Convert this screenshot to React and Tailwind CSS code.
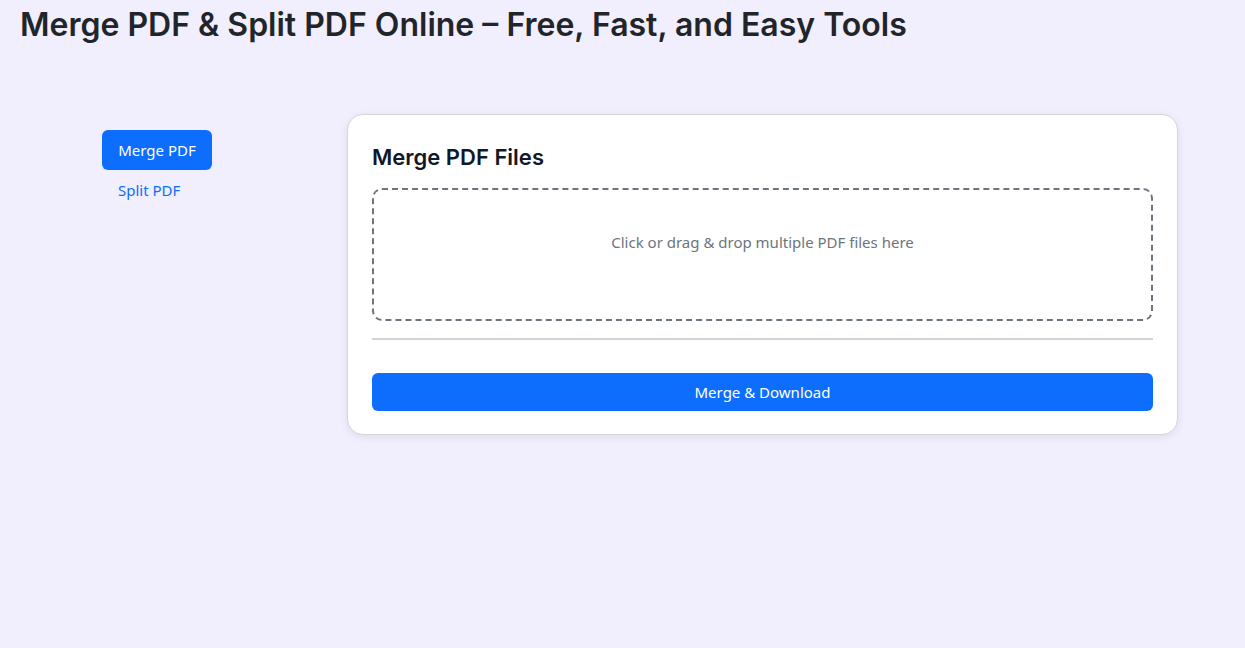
import React from "react";

export default function App() {
  return (
    <div className="min-h-screen bg-[#f1eefd] font-['Noto_Sans',sans-serif] text-[#212529]">
      <h1 className="pl-5 pt-[5px] font-['Inter',sans-serif] text-[32px] font-semibold leading-[40px] text-[#212529]">
        Merge PDF &amp; Split PDF Online – Free, Fast, and Easy Tools
      </h1>
      <div className="flex pt-[69px]">
        <aside className="w-[347px] shrink-0 pl-[102px] pt-[16px]">
          <div className="flex flex-col items-start gap-[9px]">
            <button className="h-10 w-[110px] rounded-md bg-[#0d6efd] text-[15px] text-white">Merge PDF</button>
            <a className="pl-4 text-[15px] text-[#0d6efd]">Split PDF</a>
          </div>
        </aside>
        <main className="w-[831px] rounded-2xl border border-[#d6d6d6] bg-white px-6 pb-[23px] pt-[28px] shadow-[0_2px_8px_rgba(0,0,0,0.08)]">
          <h2 className="font-['Inter',sans-serif] text-[22px] font-semibold leading-7 text-[#111827]">Merge PDF Files</h2>
          <div className="mt-[17px] flex h-[133px] justify-center rounded-[10px] border-2 border-dashed border-[#6c757d] pt-[41px] text-[15px] text-[#6c757d]">
            Click or drag &amp; drop multiple PDF files here
          </div>
          <hr className="mt-[17px] border-t-2 border-[#d3d3d3]" />
          <button className="mt-[33px] h-[38px] w-full rounded-md bg-[#0d6efd] text-[15px] text-white">Merge &amp; Download</button>
        </main>
      </div>
    </div>
  );
}
